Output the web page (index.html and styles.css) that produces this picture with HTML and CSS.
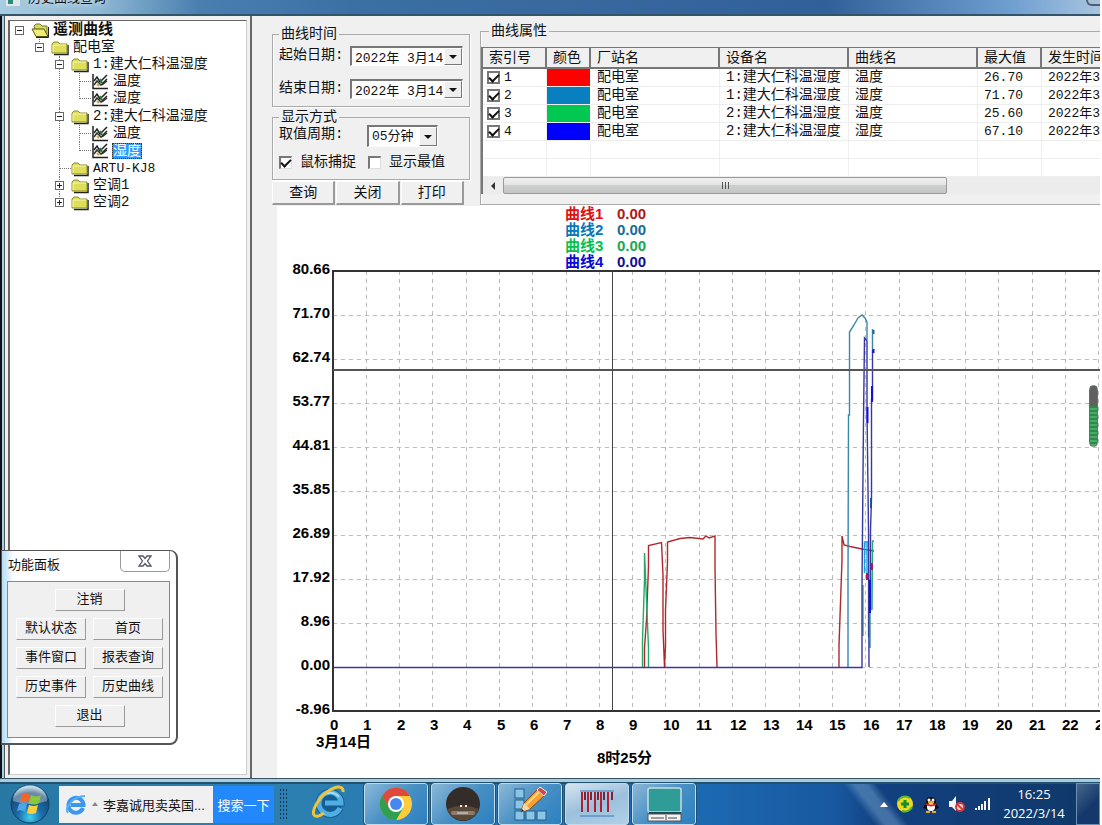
FILE: index.html
```html
<!DOCTYPE html>
<html lang="zh-CN">
<head>
    <meta charset="UTF-8">
    <meta name="viewport" content="width=device-width, initial-scale=1.0">
    <title>历史曲线查询</title>
    <link rel="stylesheet" href="styles.css">
</head>
<body>
    <!-- shared icons -->
    <svg class="defs" width="0" height="0" aria-hidden="true">
        <symbol id="folder" viewBox="0 0 18 16">
            <path d="M3 14.500H17V5" fill="none" stroke="#222" stroke-width="1.500"/>
            <path d="M1 13V4L3 2H7L9 4H16V13Z" fill="#dede5a" stroke="#8a8a30"/>
            <path d="M2 12V5H15" fill="none" stroke="#f7f7b0"/>
        </symbol>
        <symbol id="folder-open" viewBox="0 0 18 16">
            <path d="M3 3L5 1H9L11 3H16V13H6Z" fill="#d8d860" stroke="#777730"/>
            <path d="M1 6H13L17 13.500H5Z" fill="#eeee70" stroke="#55551a"/>
            <path d="M5 14.500H17.500V4" fill="none" stroke="#222"/>
        </symbol>
        <symbol id="curve" viewBox="0 0 18 16">
            <path d="M2 0V14.500H17" fill="none" stroke="#222" stroke-width="1.500"/>
            <path d="M3 7L6 3L9 8L11 6L16 1M11 10L16 5" fill="none" stroke="#222" stroke-width="1.500"/>
            <path d="M3 11L6 7L8 9L10 11L12 10L16 7" fill="none" stroke="#333" stroke-width="1.500"/>
            <path d="M6 10L8 12" stroke="#c9a832" stroke-width="2"/>
            <path d="M9 5L11 9" stroke="#2b7d3c" stroke-width="2"/>
        </symbol>
    </svg>

    <header class="titlebar">
        <span class="app-icon"></span>
        <h1>历史曲线查询</h1>
        <button class="caption-btn" aria-label="最小化"></button>
    </header>

    <main class="window">
        <nav class="tree-pane">
            <ul class="tree">
                <li>
                    <div class="node root"><button class="toggle" aria-label="折叠"></button><svg><use href="#folder-open"/></svg><span>遥测曲线</span></div>
                    <ul>
                        <li>
                            <div class="node"><button class="toggle" aria-label="折叠"></button><svg><use href="#folder"/></svg><span>配电室</span></div>
                            <ul>
                                <li>
                                    <div class="node"><button class="toggle" aria-label="折叠"></button><svg><use href="#folder"/></svg><span>1:建大仁科温湿度</span></div>
                                    <ul class="leaves">
                                        <li><div class="node"><i></i><svg><use href="#curve"/></svg><span>温度</span></div></li>
                                        <li><div class="node"><i></i><svg><use href="#curve"/></svg><span>湿度</span></div></li>
                                    </ul>
                                </li>
                                <li>
                                    <div class="node"><button class="toggle" aria-label="折叠"></button><svg><use href="#folder"/></svg><span>2:建大仁科温湿度</span></div>
                                    <ul class="leaves">
                                        <li><div class="node"><i></i><svg><use href="#curve"/></svg><span>温度</span></div></li>
                                        <li><div class="node"><i></i><svg><use href="#curve"/></svg><span class="selected">湿度</span></div></li>
                                    </ul>
                                </li>
                                <li><div class="node small"><i></i><svg><use href="#folder"/></svg><span>ARTU-KJ8</span></div></li>
                                <li><div class="node"><button class="toggle plus" aria-label="展开"></button><svg><use href="#folder"/></svg><span>空调1</span></div></li>
                                <li><div class="node"><button class="toggle plus" aria-label="展开"></button><svg><use href="#folder"/></svg><span>空调2</span></div></li>
                            </ul>
                        </li>
                    </ul>
                </li>
            </ul>
        </nav>

        <div class="content">
            <section class="top">
                <form class="query">
                    <fieldset class="group times">
                        <legend>曲线时间</legend>
                        <div class="field">
                            <label for="start">起始日期:</label>
                            <span class="combo date"><input id="start" type="text" value="2022年 3月14"><button type="button" class="drop" aria-label="选择起始日期"></button></span>
                        </div>
                        <div class="field">
                            <label for="end">结束日期:</label>
                            <span class="combo date"><input id="end" type="text" value="2022年 3月14"><button type="button" class="drop" aria-label="选择结束日期"></button></span>
                        </div>
                    </fieldset>
                    <fieldset class="group display">
                        <legend>显示方式</legend>
                        <div class="field">
                            <label for="period">取值周期:</label>
                            <span class="combo period"><select id="period"><option>05分钟</option></select><span class="drop"></span></span>
                        </div>
                        <div class="checks">
                            <label><input type="checkbox" class="check" checked>鼠标捕捉</label>
                            <label><input type="checkbox" class="check">显示最值</label>
                        </div>
                    </fieldset>
                    <div class="actions">
                        <button type="button">查询</button>
                        <button type="button">关闭</button>
                        <button type="button">打印</button>
                    </div>
                </form>

                <fieldset class="group props">
                    <legend>曲线属性</legend>
                    <div class="list">
                        <table>
                            <colgroup>
                                <col class="w-index"><col class="w-color"><col class="w-name"><col class="w-name"><col class="w-name"><col class="w-index"><col class="w-name">
                            </colgroup>
                            <thead>
                                <tr><th>索引号</th><th>颜色</th><th>厂站名</th><th>设备名</th><th>曲线名</th><th>最大值</th><th>发生时间</th></tr>
                            </thead>
                            <tbody>
                                <tr><td><label><input type="checkbox" class="check" checked>1</label></td><td class="swatch red"></td><td class="name">配电室</td><td class="name">1:建大仁科温湿度</td><td class="name">温度</td><td>26.70</td><td>2022年3月14日</td></tr>
                                <tr><td><label><input type="checkbox" class="check" checked>2</label></td><td class="swatch teal"></td><td class="name">配电室</td><td class="name">1:建大仁科温湿度</td><td class="name">湿度</td><td>71.70</td><td>2022年3月14日</td></tr>
                                <tr><td><label><input type="checkbox" class="check" checked>3</label></td><td class="swatch green"></td><td class="name">配电室</td><td class="name">2:建大仁科温湿度</td><td class="name">温度</td><td>25.60</td><td>2022年3月14日</td></tr>
                                <tr><td><label><input type="checkbox" class="check" checked>4</label></td><td class="swatch blue"></td><td class="name">配电室</td><td class="name">2:建大仁科温湿度</td><td class="name">湿度</td><td>67.10</td><td>2022年3月14日</td></tr>
                                <tr><td></td><td></td><td></td><td></td><td></td><td></td><td></td></tr>
                                <tr><td></td><td></td><td></td><td></td><td></td><td></td><td></td></tr>
                            </tbody>
                        </table>
                        <div class="scrollbar">
                            <button type="button" class="scroll-left" aria-label="向左滚动"></button>
                            <div class="thumb"><i></i><i></i><i></i></div>
                        </div>
                    </div>
                </fieldset>
            </section>

            <section class="chart">
                <svg class="plot" role="img" aria-label="3月14日 历史曲线">
                    <g transform="translate(-277 -206)">
                        <g class="legend">
                            <text x="565" y="219" fill="#e01010">曲线1</text><text x="617" y="219" fill="#b01818">0.00</text>
                            <text x="565" y="235" fill="#0878b8">曲线2</text><text x="617" y="235" fill="#186c98">0.00</text>
                            <text x="565" y="251" fill="#08c050">曲线3</text><text x="617" y="251" fill="#18a850">0.00</text>
                            <text x="565" y="267" fill="#0808d8">曲线4</text><text x="617" y="267" fill="#101090">0.00</text>
                        </g>

                        <path class="grid" d="M366 271V711M399 271V711M432 271V711M466 271V711M499 271V711M532 271V711M566 271V711M599 271V711M632 271V711M665 271V711M699 271V711M732 271V711M765 271V711M799 271V711M832 271V711M865 271V711M899 271V711M932 271V711M965 271V711M998 271V711M1032 271V711M1065 271V711M1098 271V711"/>
                        <path class="grid" d="M333 315H1200M333 359H1200M333 403H1200M333 447H1200M333 491H1200M333 535H1200M333 579H1200M333 623H1200M333 667H1200"/>

                        <!-- 1:温度 -->
                        <path class="line" stroke="#b0282c" d="M644.500 667V648L646.500 620L648.500 566V545.500L661.500 542.500L663 575V630L664.500 667L665.500 646V610L667.500 562V542L680 538.500L690 537.500L703 539L706 536L709 538L715 536V568L716 633L717 667M839 667V645L842 560V536L844 545L850 546.500L862 549L874 551"/>
                        <!-- 1:湿度 -->
                        <path class="line" stroke="#3a88a8" d="M848 667V583L848.500 415L849.500 415V332L854 325L858 318L862 315L865 318L867 322V340M872.500 329V350M870 648V613"/>
                        <path class="line strong" stroke="#186c98" d="M873.500 330V334M871 498V508"/>
                        <path class="line" stroke="#18a0d0" d="M864.500 542V573M867 542V573M864 542H868"/>
                        <!-- 2:温度 -->
                        <path class="line" stroke="#28a868" d="M642.500 667V640L644.500 580V553L646.500 600L648.500 648V667M863 585V636M868.500 580V637M872 610L872.500 541H874"/>
                        <!-- 2:湿度 -->
                        <path class="line" stroke="#3838a0" d="M333 667.500H862V585L863.500 420L864.500 338L867 341V410L868.500 530L869 667M872.500 350V400L871.500 400V498L870.500 530V610"/>
                        <path class="line strong" stroke="#1010e8" d="M867.500 407V423M872 386V402M870 580V613M873.500 349V353"/>
                        <path class="line strong" stroke="#b01858" d="M867 573V580M872 563V570"/>

                        <path class="axis" d="M1200 271H333V711H1200"/>
                        <path class="cross" d="M612.500 271V711"/>
                        <path class="cross wide" d="M333 370H1200"/>

                        <g class="y-labels">
                            <text x="330" y="274">80.66</text><text x="330" y="318">71.70</text><text x="330" y="362">62.74</text><text x="330" y="406">53.77</text><text x="330" y="450">44.81</text><text x="330" y="494">35.85</text><text x="330" y="538">26.89</text><text x="330" y="582">17.92</text><text x="330" y="626">8.96</text><text x="330" y="670">0.00</text><text x="330" y="714">-8.96</text>
                        </g>
                        <g class="x-labels">
                            <text x="330" y="730">0</text><text x="363" y="730">1</text><text x="397" y="730">2</text><text x="430" y="730">3</text><text x="463" y="730">4</text><text x="497" y="730">5</text><text x="530" y="730">6</text><text x="563" y="730">7</text><text x="596" y="730">8</text><text x="629" y="730">9</text><text x="663" y="730">10</text><text x="696" y="730">11</text><text x="730" y="730">12</text><text x="763" y="730">13</text><text x="796" y="730">14</text><text x="829" y="730">15</text><text x="863" y="730">16</text><text x="896" y="730">17</text><text x="929" y="730">18</text><text x="962" y="730">19</text><text x="996" y="730">20</text><text x="1029" y="730">21</text><text x="1062" y="730">22</text><text x="1095" y="730">23</text>
                            <text x="316" y="747">3月14日</text>
                            <text x="597" y="763">8时25分</text>
                        </g>
                    </g>
                </svg>
                <div class="meter"></div>
            </section>
        </div>
    </main>

    <aside class="panel">
        <div class="panel-head">
            <h2>功能面板</h2>
            <button class="close" aria-label="关闭面板">
                <svg width="14" height="12" viewBox="0 0 14 12"><path d="M1 1H5L7 3.500L9 1H13L9.500 6L13 11H9L7 8.500L5 11H1L4.500 6Z" fill="#fff" stroke="#555a66" stroke-width="1.300"/></svg>
            </button>
        </div>
        <div class="panel-body">
            <button class="wide">注销</button>
            <button>默认状态</button>
            <button>首页</button>
            <button>事件窗口</button>
            <button>报表查询</button>
            <button>历史事件</button>
            <button>历史曲线</button>
            <button class="wide">退出</button>
        </div>
    </aside>

    <footer class="taskbar">
        <button class="start" aria-label="开始">
            <svg width="42" height="42" viewBox="0 0 42 42">
                <defs>
                    <radialGradient id="orb" cx="50%" cy="85%" r="80%"><stop offset="0" stop-color="#3fd0f0"/><stop offset=".4" stop-color="#1c6ca8"/><stop offset=".8" stop-color="#184a78"/><stop offset="1" stop-color="#a8c8dc"/></radialGradient>
                </defs>
                <circle cx="21" cy="21" r="19" fill="url(#orb)" stroke="#0d3f68"/>
                <path d="M4 18A17 16 0 0 1 38 18Q21 24 4 18Z" fill="#fff" opacity=".35"/>
                <path d="M13 11Q17 9 21 12L19 20Q15 17 11 19Z" fill="#f0652a"/>
                <path d="M22 12Q27 15 32 12L30 20Q25 23 20 20Z" fill="#8cc83c"/>
                <path d="M10 21Q14 19 18 21L16 29Q12 26 8 28Z" fill="#4ea6ea"/>
                <path d="M20 22Q25 24 29 22L27 30Q22 32 18 30Z" fill="#fcd03c"/>
            </svg>
        </button>
        <div class="search">
            <svg width="22" height="22" viewBox="0 0 22 22"><path d="M18 15A7.500 7.500 0 1 1 18.500 12H6" fill="none" stroke="#3a96ee" stroke-width="4"/><path d="M3 20C-1 15 8 3 20 3" fill="none" stroke="#58b0f4" stroke-width="2"/></svg>
            <i class="up"></i>
            <a href="#">李嘉诚甩卖英国...</a>
            <button>搜索一下</button>
        </div>
        <span class="grip"></span>
        <button class="quick" aria-label="Internet Explorer">
            <svg width="38" height="36" viewBox="0 0 38 36">
                <circle cx="20" cy="19" r="12" fill="#155b94"/>
                <path d="M30 24A11 11 0 1 1 31 19H15" fill="none" stroke="#1c5c90" stroke-width="7"/>
                <path d="M30 24A11 11 0 1 1 31 19H15" fill="none" stroke="#4cb0e4" stroke-width="5"/>
                <path d="M11 14A11 11 0 0 1 29 13" fill="none" stroke="#a4def4" stroke-width="2"/>
                <path d="M33 8C34-2 16 4 7 19C0 31 4 36 14 29" fill="none" stroke="#f2c338" stroke-width="3"/>
            </svg>
        </button>
        <div class="apps">
            <button aria-label="Chrome">
                <svg width="34" height="34" viewBox="0 0 34 34">
                    <circle cx="17" cy="17" r="16" fill="#fccc3c"/>
                    <path d="M17 17L3.100 9A16 16 0 0 1 31 9H17Z" fill="#dd4a3c"/>
                    <path d="M3.100 9A16 16 0 0 0 17 33L24 21L17 17L10 21Z" fill="#30a050"/>
                    <path d="M3.100 9L10 21L17 9Z" fill="#dd4a3c"/>
                    <path d="M3.100 9A16 16 0 0 0 17 33L24 21H10Z" fill="#30a050"/>
                    <circle cx="17" cy="17" r="8" fill="#fff"/><circle cx="17" cy="17" r="6" fill="#4688f0"/>
                </svg>
            </button>
            <button aria-label="浏览器">
                <svg width="36" height="36" viewBox="0 0 36 36"><circle cx="18" cy="18" r="17" fill="#342c28"/><path d="M2 23A17 17 0 0 0 34 23Q18 16 2 23Z" fill="#5a4836"/><path d="M15 20H17M20 20H22" stroke="#eee" stroke-width="2"/><rect x="6" y="25" width="24" height="4" rx="2" fill="#8c7c70"/><path d="M12 27H23" stroke="#ddd"/></svg>
            </button>
            <button aria-label="组态编辑">
                <svg width="36" height="36" viewBox="0 0 36 36">
                    <g fill="#8cc4e4" stroke="#245f8c"><rect x="3" y="3" width="9" height="9"/><rect x="3" y="14" width="9" height="9"/><rect x="3" y="25" width="9" height="9"/><rect x="14" y="25" width="9" height="9"/><rect x="25" y="25" width="9" height="9"/></g>
                    <path d="M9 26L12 17L25 4L32 10L18 23Z" fill="#f4a032" stroke="#8a4c14"/>
                    <path d="M14 19L27 6" stroke="#ffd884" stroke-width="2"/>
                    <path d="M25 4L28 1L35 6L32 10Z" fill="#d04848" stroke="#eee"/>
                    <path d="M9 26L12 17L18 23Z" fill="#f0d8b0"/><path d="M9 26L10 23L12 25Z" fill="#222"/>
                </svg>
            </button>
            <button class="active" aria-label="历史曲线查询">
                <svg width="36" height="32" viewBox="0 0 36 32"><path d="M1 3H35M1 28H35" stroke="#3878b8"/><path d="M3 4V24M9 4V24M16 4V24M22 4V24M29 4V24" stroke="#b02030" stroke-width="2"/><path d="M6 4V12M12 4V12M19 4V12M25 4V12M33 4V12" stroke="#702840" stroke-width="2"/></svg>
            </button>
            <button aria-label="监控主机">
                <svg width="36" height="36" viewBox="0 0 36 36"><rect x="2" y="2" width="33" height="24" rx="2" fill="#309c98" stroke="#c8dce0" stroke-width="1.500"/><path d="M3 27H35" stroke="#184858" stroke-width="2"/><rect x="2" y="28" width="33" height="7" fill="#f4f4f4" stroke="#555"/><path d="M5 32H18M22 32H31" stroke="#444"/><path d="M20 29V34" stroke="#444"/></svg>
            </button>
        </div>
        <div class="tray">
            <i class="up white"></i>
            <svg width="18" height="18" viewBox="0 0 18 18"><circle cx="9" cy="9" r="8" fill="#f0d820"/><path d="M2 6A8 8 0 0 1 14 3" fill="none" stroke="#50b838" stroke-width="2"/><path d="M16 12A8 8 0 0 1 6 16" fill="none" stroke="#50b838" stroke-width="2"/><path d="M9 5V13M5 9H13" stroke="#109030" stroke-width="3"/></svg>
            <svg width="18" height="18" viewBox="0 0 18 18"><path d="M4 8C3 0 15 0 14 8L17 13L14 14C14 16 4 16 4 14L1 13Z" fill="#111"/><ellipse cx="9" cy="12" rx="4" ry="4" fill="#fff"/><circle cx="7" cy="5" r="1.500" fill="#fff"/><circle cx="11" cy="5" r="1.500" fill="#fff"/><path d="M6 7H12" stroke="#f0a820" stroke-width="2"/><path d="M4 9Q9 12 14 9" fill="none" stroke="#e02020" stroke-width="2"/><path d="M4 17H8M10 17H14" stroke="#f0a820" stroke-width="2"/></svg>
            <svg width="18" height="18" viewBox="0 0 18 18"><path d="M1 6H4L8 1V16L4 12H1Z" fill="#f4f4f4"/><circle cx="12" cy="12" r="4" fill="#f8dede" stroke="#d83838" stroke-width="2"/><path d="M9 9L15 15" stroke="#d83838" stroke-width="2"/></svg>
            <svg width="18" height="18" viewBox="0 0 18 18"><path d="M2 13V15M5 11V15M8 9V15M11 6V15M15 3V15" stroke="#f4f4f4" stroke-width="2"/></svg>
        </div>
        <div class="clock"><time>16:25</time><span>2022/3/14</span></div>
        <button class="desktop" aria-label="显示桌面"></button>
    </footer>
</body>
</html>
```

FILE: styles.css
```css
* {
    margin: 0;
    padding: 0;
    box-sizing: border-box;
}

body {
    font-family: "Liberation Mono", "Noto Sans CJK SC", monospace;
    font-size: 14px;
    color: #111;
    background: #fff;
    height: 100vh;
    padding-right: 2px;
    display: flex;
    flex-direction: column;
    overflow: hidden;
}

button,
input,
select {
    font: inherit;
    color: inherit;
    border: none;
    background: none;
}

ul {
    list-style: none;
}

.defs {
    position: absolute;
}

/* title bar */
.titlebar {
    height: 16px;
    flex: none;
    display: flex;
    align-items: flex-end;
    gap: 8px;
    padding: 0 0 8px 6px;
    overflow: hidden;
    background: linear-gradient(90deg, #a8cce0 0%, #8fb8d4 9%, #4a80b0 18%, #3a70a4 32%, #38699f 50%, #306098 75%, #6f9fd0 92%, #a8c4e0 100%);
    border-bottom: 2px solid #34546a;
}

.app-icon {
    width: 14px;
    height: 16px;
    flex: none;
    background: linear-gradient(90deg, #2c8878 50%, #dce8e8 50%);
    border: 2px solid #dce8e8;
}

.titlebar h1 {
    flex: 1;
    font-size: 13px;
    font-weight: normal;
    line-height: 14px;
    text-shadow: 0 0 6px #fff;
}

.caption-btn {
    width: 14px;
    height: 20px;
    border: 2px solid #4c6078;
    border-right: none;
    border-radius: 0 0 0 6px;
    background: #a8c0d8;
}

/* window */
.window {
    flex: 1;
    min-height: 0;
    display: flex;
    background: #f0f0f0;
    border-left: 2px solid #111;
}

.tree-pane {
    width: 250px;
    flex: none;
    padding: 4px 3px 3px 6px;
    background: linear-gradient(90deg, #9fd0e8 0, #9fd0e8 2px, #555 2px, #555 3px, #f0f0f0 3px);
    border-right: 2px solid #666;
}

.tree {
    height: 100%;
    padding: 1px 0 0 5px;
    background: #fff;
    border: 1px solid #ccc;
    border-top: 1px solid #666;
    border-left: 2px solid #666;
}

.tree ul {
    padding-left: 20px;
}

.tree .leaves {
    padding-bottom: 1px;
}

.tree li {
    position: relative;
}

.tree li::before {
    content: "";
    position: absolute;
    left: 4px;
    top: 0;
    bottom: 0;
    border-left: 1px dotted #777;
}

.tree li:last-child::before {
    bottom: auto;
    height: 9px;
}

.tree > li::before {
    display: none;
}

.node {
    height: 17px;
    display: flex;
    align-items: center;
    line-height: 17px;
    white-space: nowrap;
}

.node svg {
    width: 18px;
    height: 16px;
    flex: none;
    margin-right: 3px;
}

.node span {
    padding: 0 1px;
}

.node.root {
    font-size: 15px;
    font-weight: bold;
}

.node.small {
    font-size: 13px;
}

.node i {
    width: 12px;
    margin-left: 4px;
    border-top: 1px dotted #777;
}

.node .selected {
    color: #fff;
    background: #3399ff;
    outline: 1px dotted #333;
    outline-offset: -1px;
    line-height: 16px;
}

.toggle {
    position: relative;
    width: 9px;
    height: 9px;
    margin-right: 7px;
    border: 1px solid #666;
    background: linear-gradient(#222, #222) center / 5px 1px no-repeat #fff;
}

.toggle.plus {
    background: linear-gradient(#222, #222) center / 5px 1px no-repeat, linear-gradient(#222, #222) center / 1px 5px no-repeat, #fff;
}

.content {
    flex: 1;
    min-width: 0;
    display: flex;
    flex-direction: column;
}

.top {
    height: 190px;
    flex: none;
    display: flex;
    gap: 10px;
    padding-left: 20px;
}

.query {
    width: 198px;
    flex: none;
    padding-top: 10px;
}

.group {
    border: 1px solid #aaa;
    box-shadow: inset 1px 0 #fff, 1px 1px #fff;
}

.group legend {
    padding: 0 2px;
    line-height: 16px;
}

.times {
    height: 81px;
    padding: 4px 6px 0 6px;
}

.times .field + .field {
    margin-top: 13px;
}

.display {
    height: 71px;
    margin-top: 2px;
    padding: 0 6px;
}

.field {
    display: flex;
    align-items: flex-start;
    justify-content: space-between;
}

.field label {
    line-height: 18px;
}

.combo {
    display: flex;
    font-size: 13px;
    background: #fff;
    border: 1px solid #fff;
    border-top: 2px solid #777;
    border-left: 2px solid #777;
}

.date {
    width: 113px;
    height: 20px;
}

.combo input,
.combo select {
    flex: 1;
    min-width: 0;
    appearance: none;
    padding-left: 3px;
}

.drop {
    width: 18px;
    flex: none;
    border: 1px solid #fff;
    border-right-color: #777;
    border-bottom-color: #777;
    background: #eee;
    display: flex;
    align-items: center;
    justify-content: center;
}

.drop::after {
    content: "";
    border: 4px solid transparent;
    border-top-color: #111;
    border-bottom: none;
}

.period {
    width: 71px;
    height: 22px;
    margin-right: 25px;
}

.checks {
    display: flex;
    gap: 12px;
    margin-top: 6px;
}

.checks label,
.list label {
    display: flex;
    align-items: center;
    gap: 8px;
    line-height: 18px;
}

.check {
    width: 13px;
    height: 13px;
    flex: none;
    appearance: none;
    background: #fff;
    border: 1px solid #ddd;
    border-top: 2px solid #777;
    border-left: 2px solid #777;
    display: grid;
    place-items: center;
}

.check:checked::after {
    content: "";
    width: 8px;
    height: 4px;
    border-left: 2px solid #111;
    border-bottom: 2px solid #111;
    transform: translateY(-1px) rotate(-45deg);
}

.actions {
    display: flex;
    gap: 1px;
    margin-top: 1px;
    padding-right: 6px;
}

.actions button {
    flex: 1;
    height: 24px;
    line-height: 20px;
    border: 1px solid #fff;
    border-right: 2px solid #999;
    border-bottom: 2px solid #999;
}

/* curve list */
.props {
    flex: 1;
    min-width: 0;
    height: 182px;
    margin-top: 7px;
    border-right: none;
}

.props legend {
    margin-left: 8px;
}

.list {
    margin-top: 8px;
    overflow: hidden;
    background: #fff;
    border-left: 2px solid #777;
}

.list table {
    width: 688px;
    table-layout: fixed;
    border-collapse: separate;
    border-spacing: 0;
    font-size: 14px;
}

.w-index {
    width: 64px;
}

.w-color {
    width: 44px;
}

.w-name {
    width: 129px;
}

.list th {
    height: 22px;
    padding-left: 6px;
    text-align: left;
    font-weight: normal;
    line-height: 18px;
    white-space: nowrap;
    background: #f0f0f0;
    border-top: 1px solid #777;
    border-right: 2px solid #777;
    border-bottom: 2px solid #777;
}

.list td {
    height: 18px;
    padding-left: 6px;
    line-height: 17px;
    font-size: 13px;
    white-space: nowrap;
    border-right: 1px solid #eee;
    border-bottom: 1px solid #eee;
}

.list td.name {
    font-size: 14px;
}

.list td:first-child {
    padding-left: 4px;
}

.list td label {
    gap: 4px;
    line-height: 17px;
}

.list .check {
    border: 2px solid #777;
}

.list td.swatch {
    border-right: 1px solid #fff;
    background-clip: padding-box;
}

.red {
    background: #ff0000;
}

.teal {
    background: #0880c0;
}

.green {
    background: #00c850;
}

.blue {
    background: #0000ff;
}

.scrollbar {
    height: 17px;
    display: flex;
    background: #ececec;
}

.scroll-left {
    width: 20px;
    display: grid;
    place-items: center;
}

.scroll-left::after {
    content: "";
    border: 4px solid transparent;
    border-right-color: #333;
    border-left: none;
}

.thumb {
    width: 72%;
    display: flex;
    gap: 2px;
    align-items: center;
    justify-content: center;
    border: 1px solid #999;
    border-radius: 2px;
    background: linear-gradient(#f0f0f0, #e4e4e4 45%, #cdcfcf 50%, #c4c6c6);
}

.thumb i {
    width: 1px;
    height: 7px;
    background: #555;
}

/* chart */
.chart {
    flex: 1;
    min-height: 0;
    position: relative;
    margin-left: 25px;
    background: #fff;
}

.plot {
    display: block;
    width: 100%;
    height: 100%;
}

.plot text {
    font-family: "Liberation Sans", "Noto Sans CJK SC", sans-serif;
    font-size: 15px;
    font-weight: bold;
}

.plot .y-labels text {
    text-anchor: end;
}

.grid {
    fill: none;
    stroke: #bbb;
    stroke-dasharray: 4 4;
    shape-rendering: crispEdges;
}

.axis {
    fill: none;
    stroke: #333;
    stroke-width: 2;
}

.cross {
    fill: none;
    stroke: #444;
}

.cross.wide {
    stroke: #555;
    stroke-width: 2;
}

.line {
    fill: none;
    stroke-width: 1.4;
}

.line.strong {
    stroke-width: 2;
}

.meter {
    position: absolute;
    right: 2px;
    top: 179px;
    width: 9px;
    height: 62px;
    border: 1px solid #667066;
    border-radius: 5px;
    background: linear-gradient(#606060 20px, transparent 20px), repeating-linear-gradient(#2c8a4c 0, #2c8a4c 2px, #48ac68 2px, #48ac68 4px);
}

/* floating panel */
.panel {
    position: absolute;
    left: 1px;
    top: 550px;
    width: 177px;
    padding: 0 6px 5px 5px;
    background: linear-gradient(90deg, #b4dcf4, #fff 12px);
    border: 1px solid #555;
    border-width: 1px 2px 2px 1px;
    border-radius: 0 8px 8px 0;
    font-size: 13px;
}

.panel-head {
    height: 30px;
    display: flex;
    justify-content: space-between;
}

.panel-head h2 {
    font-size: 13px;
    font-weight: normal;
    line-height: 30px;
    padding-left: 1px;
}

.close {
    width: 50px;
    height: 21px;
    display: grid;
    place-items: center;
    border: 1px solid #999;
    border-top: none;
    border-radius: 0 0 5px 5px;
}

.panel-body {
    display: grid;
    grid-template-columns: 70px 70px;
    grid-auto-rows: 22px;
    gap: 7px;
    justify-content: center;
    padding: 7px 0 10px 2px;
    background: #f0f0f0;
    border: 1px solid #888;
}

.panel-body button {
    border: 1px solid #fff;
    border-right-color: #999;
    border-bottom-color: #999;
    line-height: 20px;
}

.panel-body .wide {
    grid-column: 1 / 3;
    width: 70px;
    justify-self: center;
}

/* taskbar */
.taskbar {
    height: 47px;
    flex: none;
    display: flex;
    align-items: center;
    padding-left: 9px;
    border-top: 1px solid #345468;
    box-shadow: inset 0 3px #a8ccdc, inset 0 5px #23506c;
    background: linear-gradient(52deg, transparent 77%, #6c9cc888 78%, #6c9cc888 79%, transparent 80%), linear-gradient(90deg, #2878a4, #2c80b0 25%, #2874b4 50%, #1c68b0 65%, #1858a0 76%, #124080 80%, #103868);
    padding-top: 4px;
}

.start {
    width: 42px;
    height: 42px;
    margin-right: 8px;
}

.search {
    height: 37px;
    width: 215px;
    display: flex;
    align-items: center;
    gap: 5px;
    padding-left: 6px;
    background: #f0f0f0;
    font-size: 13px;
    font-family: "Liberation Sans", "Noto Sans CJK SC", sans-serif;
}

.search a {
    flex: 1;
    color: #111;
    text-decoration: none;
    white-space: nowrap;
}

.search button {
    width: 61px;
    flex: none;
    align-self: stretch;
    color: #fff;
    background: #2288fc;
}

.up {
    border: 3px solid transparent;
    border-bottom: 4px solid #888;
    border-top: none;
}

.up.white {
    border-width: 0 4px 5px;
    border-bottom-color: #fff;
}

.grip {
    width: 9px;
    height: 32px;
    margin: 0 20px 0 5px;
    background: radial-gradient(circle at center, #0c3454 1px, transparent 1px) 0 0 / 3px 4px;
}

.quick {
    width: 42px;
    height: 40px;
    margin-right: 14px;
}

.apps {
    display: flex;
    gap: 3px;
    align-self: stretch;
}

.apps button {
    width: 64px;
    display: grid;
    place-items: center;
    border: 1px solid #c0dcec;
    border-radius: 3px;
    outline: 1px solid #23506c;
    background: linear-gradient(135deg, #8cb8d8, #4890c4 50%, #2c80c0);
}

.apps .active {
    background: linear-gradient(160deg, #d4e4f0, #9cc0dc 50%, #b0d0e8);
}

.tray {
    display: flex;
    align-items: center;
    gap: 8px;
    margin-left: auto;
}

.clock {
    display: flex;
    flex-direction: column;
    align-items: center;
    width: 84px;
    color: #fff;
    font: 13px/19px "Open Sans", sans-serif;
}

.desktop {
    width: 24px;
    align-self: stretch;
    border: 1px solid #6c90b4;
    background: linear-gradient(135deg, #44688c, #14386c 60%);
}
```
